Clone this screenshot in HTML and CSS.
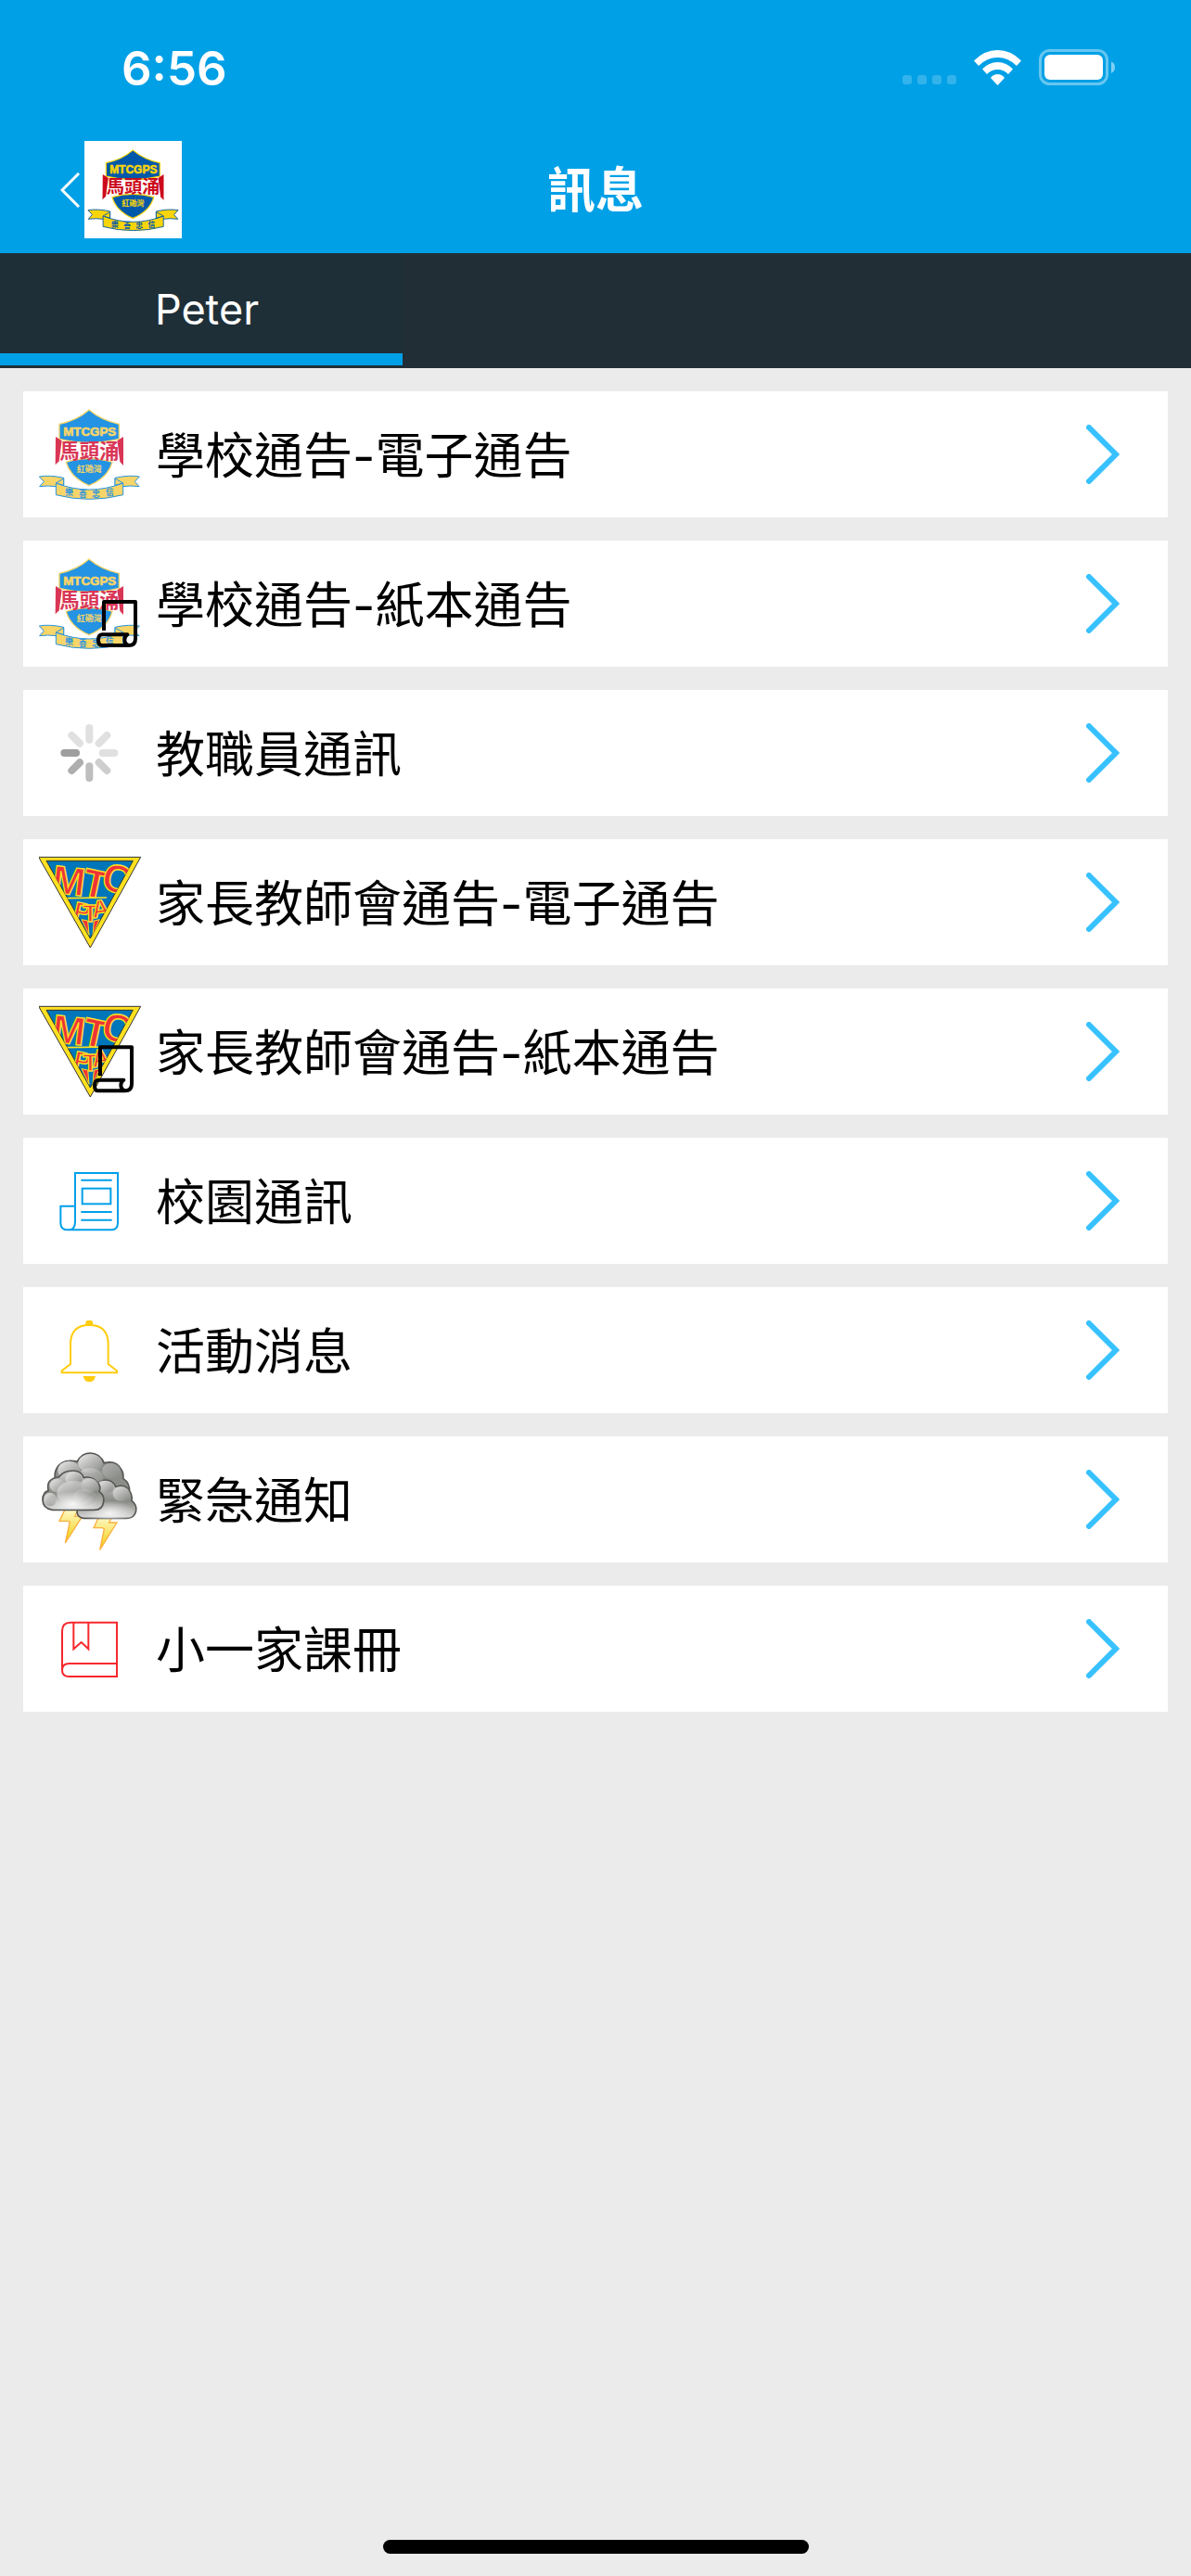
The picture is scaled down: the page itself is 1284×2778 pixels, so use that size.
FILE: index.html
```html
<!DOCTYPE html>
<html lang="zh-Hant">
<head>
  <meta charset="UTF-8">
  <meta name="viewport" content="width=device-width, initial-scale=1.0">
  <title>訊息</title>
  <link rel="stylesheet" href="styles.css">
</head>
<body>
  <!-- Shared artwork -->
  <svg class="defs" width="0" height="0" aria-hidden="true">
    <defs>
      <g id="crest">
        <path class="crest-shield" d="M228 96Q190 130 132 142V190Q180 202 228 202T325 190V142Q268 130 228 96Z"/>
        <path class="crest-shield" d="M154 265Q190 254 228 254T303 265Q290 315 228 341Q168 315 154 265Z"/>
        <text class="crest-name" x="230" y="180">MTCGPS</text>
        <path class="crest-corner" d="M120 183L140 196L131 262L119 274Z"/>
        <path class="crest-corner" d="M339 183L319 196L328 264L339 276Z"/>
        <text class="crest-school" x="229" y="251">馬頭涌</text>
        <text class="crest-area" x="229" y="297">紅磡灣</text>
        <path class="crest-ribbon" d="M67 312Q100 306 146 316V344H122Q95 340 68 344L82 328Z"/>
        <path class="crest-ribbon" d="M391 312Q358 306 312 316V344H336Q363 340 390 344L376 328Z"/>
        <path class="crest-ribbon" d="M121 333Q175 354 229 354T338 333V371Q284 385 229 385T121 371Z"/>
        <path class="crest-ribbon" d="M121 333L146 318V340ZM338 333L312 318V340Z"/>
        <text class="crest-motto" x="164" y="372">樂</text>
        <text class="crest-motto" x="208" y="377">善</text>
        <text class="crest-motto" x="251" y="377">忠</text>
        <text class="crest-motto" x="295" y="372">信</text>
      </g>
      <clipPath id="pta-clip"><path d="M90 87H370L232 337Z"/></clipPath>
      <g id="pta">
        <path d="M65 74H395L232 367Z" fill="#ffe11f" stroke="#333" stroke-width="3"/>
        <path d="M90 86H370L232 337Z" fill="#0076ba" stroke="#333" stroke-width="3"/>
        <g clip-path="url(#pta-clip)">
          <text class="pta-big" x="104" y="188" transform="rotate(7 104 188)">M</text>
          <text class="pta-big" x="200" y="196" transform="rotate(12 200 196)">T</text>
          <text class="pta-big" x="264" y="178" transform="rotate(12 264 178)">C</text>
          <path d="M157 207L285 205" stroke="#ffe11f" stroke-width="5"/>
          <text class="pta-small" x="174" y="272" transform="rotate(12 174 272)">P</text>
          <text class="pta-small" x="208" y="282">T</text>
          <text class="pta-small" x="240" y="272" transform="rotate(-8 240 272)">A</text>
          <path d="M204 276L228 326L224 280ZM262 276L240 326L244 280Z" fill="#ee3338" stroke="#ffe11f" stroke-width="3"/>
        </g>
      </g>
      <g id="paper" fill="none" stroke="#000" stroke-width="12" stroke-linejoin="round">
        <path d="M276 330V237H378V356Q378 378 356 378H270Q258 378 258 361T270 343H352Q343 349 343 360Q343 374 356 378"/>
      </g>
      <path id="chevron" d="M3 3L32 32L3 61" fill="none" stroke="#38c1ff" stroke-width="6" stroke-linecap="round"/>
      <linearGradient id="cloud-fill" x1="0" y1="0" x2="0" y2="1">
        <stop offset="0" stop-color="#d2d2d2"/>
        <stop offset="0.55" stop-color="#888a85"/>
        <stop offset="1" stop-color="#d8d8d8"/>
      </linearGradient>
      <linearGradient id="puff-fill" x1="0" y1="0" x2="1" y2="1">
        <stop offset="0" stop-color="#ececec"/>
        <stop offset="1" stop-color="#858783"/>
      </linearGradient>
      <radialGradient id="glow">
        <stop offset="0" stop-color="#fff"/>
        <stop offset="1" stop-color="#fff" stop-opacity="0"/>
      </radialGradient>
      <linearGradient id="bolt-fill" x1="0" y1="0" x2="0" y2="1">
        <stop offset="0" stop-color="#fffbd0"/>
        <stop offset="1" stop-color="#f0cc00"/>
      </linearGradient>
    </defs>
  </svg>

  <header class="header">
    <div class="status-bar">
      <span class="time">6:56</span>
      <div class="status-icons">
        <svg class="signal" viewBox="0 0 58 38" aria-hidden="true">
          <rect x="0" y="27" width="10" height="10" rx="3"/>
          <rect x="16" y="27" width="10" height="10" rx="3"/>
          <rect x="32" y="27" width="10" height="10" rx="3"/>
          <rect x="48" y="27" width="10" height="10" rx="3"/>
        </svg>
        <svg class="wifi" viewBox="0 0 51 38" aria-hidden="true">
          <path d="M0 11.500Q11 0 25.500 0T51 11.500L46 17Q37 8 25.500 8T5 17Z"/>
          <path d="M9 20.500Q16 13 25.500 13T42 20.500L37 26Q32 21 25.500 21T14 26Z"/>
          <path d="M18 30Q21 26 25.500 26T33 30L25.500 38Z"/>
        </svg>
        <svg class="battery" viewBox="0 0 82 40" aria-hidden="true">
          <rect x="1.500" y="1.500" width="72" height="36" rx="10" fill="none" stroke="#fff" stroke-opacity="0.4" stroke-width="3"/>
          <rect x="6" y="6" width="63" height="27" rx="6" fill="#fff"/>
          <path d="M78 13.500Q82 15 82 19.500T78 26Z" fill="#fff" fill-opacity="0.5"/>
        </svg>
      </div>
    </div>

    <div class="nav-bar">
      <button class="back-btn" type="button" aria-label="返回">
        <svg class="back-arrow" viewBox="0 0 22 38" aria-hidden="true">
          <path d="M20 1L2 19L20 37" fill="none" stroke="#fff" stroke-width="3"/>
        </svg>
        <svg class="school-logo" viewBox="54 63 350 350" aria-hidden="true"><use href="#crest"/></svg>
      </button>
      <h1>訊息</h1>
    </div>
  </header>

  <nav class="tabs">
    <button class="tab active" type="button">Peter</button>
  </nav>

  <main>
    <ul class="message-list">
      <li>
        <a class="card" href="#e-notice">
          <svg class="icon" viewBox="66 75 330 330" aria-hidden="true"><use href="#crest"/></svg>
          <span class="label">學校通告-電子通告</span>
          <svg class="arrow" viewBox="0 0 36 64" aria-hidden="true"><use href="#chevron"/></svg>
        </a>
      </li>
      <li>
        <a class="card" href="#paper-notice">
          <svg class="icon" viewBox="66 78 330 330" aria-hidden="true">
            <use href="#crest" y="3"/>
            <use href="#paper"/>
          </svg>
          <span class="label">學校通告-紙本通告</span>
          <svg class="arrow" viewBox="0 0 36 64" aria-hidden="true"><use href="#chevron"/></svg>
        </a>
      </li>
      <li>
        <a class="card" href="#staff">
          <svg class="icon" viewBox="-163 -165 330 330" fill="none" stroke-width="24" stroke-linecap="round" aria-hidden="true">
            <path d="M0 -81V-43" stroke="#e0e0e0"/>
            <path d="M57 -57L31 -31" stroke="#e0e0e0"/>
            <path d="M43 0H81" stroke="#e0e0e0"/>
            <path d="M31 31L57 57" stroke="#cecece"/>
            <path d="M0 43V81" stroke="#bebebe"/>
            <path d="M-31 31L-57 57" stroke="#aeaeae"/>
            <path d="M-43 0H-81" stroke="#9e9e9e"/>
            <path d="M-31 -31L-57 -57" stroke="#e0e0e0"/>
          </svg>
          <span class="label">教職員通訊</span>
          <svg class="arrow" viewBox="0 0 36 64" aria-hidden="true"><use href="#chevron"/></svg>
        </a>
      </li>
      <li>
        <a class="card" href="#pta-e-notice">
          <svg class="icon" viewBox="66 55 330 330" aria-hidden="true"><use href="#pta"/></svg>
          <span class="label">家長教師會通告-電子通告</span>
          <svg class="arrow" viewBox="0 0 36 64" aria-hidden="true"><use href="#chevron"/></svg>
        </a>
      </li>
      <li>
        <a class="card" href="#pta-paper-notice">
          <svg class="icon" viewBox="66 55 330 330" aria-hidden="true">
            <use href="#pta"/>
            <use href="#paper" x="-12" y="-31"/>
          </svg>
          <span class="label">家長教師會通告-紙本通告</span>
          <svg class="arrow" viewBox="0 0 36 64" aria-hidden="true"><use href="#chevron"/></svg>
        </a>
      </li>
      <li>
        <a class="card" href="#newsletter">
          <svg class="icon" viewBox="66 46 330 330" fill="none" stroke="#00a0e9" stroke-width="6" aria-hidden="true">
            <path d="M183 279V121H321V282Q321 305 298 305H160Q136 305 136 282V228H183V279Q183 305 160 305"/>
            <path d="M202 144H302M202 247H302M202 273H302"/>
            <rect x="206" y="171" width="92" height="50"/>
          </svg>
          <span class="label">校園通訊</span>
          <svg class="arrow" viewBox="0 0 36 64" aria-hidden="true"><use href="#chevron"/></svg>
        </a>
      </li>
      <li>
        <a class="card" href="#events">
          <svg class="icon" viewBox="66 528 330 330" aria-hidden="true">
            <path d="M168 738V674Q168 612 229 612T290 674V738L318 760V766H140V760Z" fill="none" stroke="#ffcc0d" stroke-width="6"/>
            <path d="M217 612V604Q217 597 224 597H234Q240 597 240 604V612ZM209 777H249Q245 796 229 796T209 777Z" fill="#ffcc0d"/>
          </svg>
          <span class="label">活動消息</span>
          <svg class="arrow" viewBox="0 0 36 64" aria-hidden="true"><use href="#chevron"/></svg>
        </a>
      </li>
      <li>
        <a class="card" href="#emergency">
          <svg class="icon" viewBox="66 68 330 330" aria-hidden="true">
            <g fill="url(#bolt-fill)" stroke="#fbb040" stroke-width="4">
              <path d="M152 262L132 303H158L166 305L151 374L206 288H182L194 262Z"/>
              <path d="M262 285L243 325H270L277 328L263 396L318 308H293L304 285Z"/>
            </g>
            <g stroke="#555753" stroke-width="5">
              <path d="M150 215Q105 170 122 135Q138 100 190 110Q205 83 232 83Q262 83 277 115Q315 105 332 135Q341 150 338 165Q362 180 358 210L300 240Z" fill="#8b8d89"/>
              <path d="M210 294Q185 290 190 265Q192 245 215 238Q215 205 240 200Q250 170 280 170Q305 170 314 192Q350 180 364 215Q368 227 366 237Q383 250 380 270Q375 294 350 294Z" fill="url(#cloud-fill)"/>
            </g>
            <g fill="url(#puff-fill)">
              <ellipse cx="232" cy="117" rx="39" ry="31"/>
              <ellipse cx="163" cy="139" rx="36" ry="30"/>
              <ellipse cx="232" cy="162" rx="42" ry="30" opacity="0.6"/>
              <ellipse cx="300" cy="140" rx="30" ry="25" opacity="0.4"/>
              <ellipse cx="281" cy="193" rx="27" ry="20"/>
              <ellipse cx="332" cy="215" rx="27" ry="24" opacity="0.8"/>
            </g>
            <ellipse cx="295" cy="278" rx="82" ry="42" fill="url(#glow)" opacity="0.8" clip-path="inset(0 0 25px 0)"/>
            <path d="M110 267Q78 262 78 235Q78 210 96 205Q88 165 130 161Q145 140 176 140Q203 140 210 162Q240 157 255 178Q268 190 261 207Q279 220 275 240Q272 267 245 267Z" fill="url(#cloud-fill)" stroke="#555753" stroke-width="5"/>
            <g fill="url(#puff-fill)">
              <ellipse cx="126" cy="189" rx="25" ry="22"/>
              <ellipse cx="178" cy="166" rx="27" ry="21"/>
              <ellipse cx="230" cy="188" rx="28" ry="23" opacity="0.8"/>
              <ellipse cx="102" cy="233" rx="20" ry="22"/>
              <ellipse cx="178" cy="211" rx="54" ry="38" opacity="0.7"/>
              <ellipse cx="214" cy="226" rx="38" ry="27" opacity="0.3"/>
            </g>
            <ellipse cx="175" cy="247" rx="82" ry="40" fill="url(#glow)" opacity="0.9" clip-path="inset(0 0 22px 0)"/>
          </svg>
          <span class="label">緊急通知</span>
          <svg class="arrow" viewBox="0 0 36 64" aria-hidden="true"><use href="#chevron"/></svg>
        </a>
      </li>
      <li>
        <a class="card" href="#homework">
          <svg class="icon" viewBox="66 551 330 330" fill="none" stroke="#f7282d" stroke-width="6" aria-hidden="true">
            <path d="M141 785V658Q141 631 168 631H318V806H164Q141 806 141 785Q141 764 164 764H318"/>
            <path d="M178 631V717L203 695L226 717V631"/>
          </svg>
          <span class="label">小一家課冊</span>
          <svg class="arrow" viewBox="0 0 36 64" aria-hidden="true"><use href="#chevron"/></svg>
        </a>
      </li>
    </ul>
  </main>

  <div class="home-indicator"></div>
</body>
</html>
```
FILE: styles.css
```css
* {
  margin: 0;
  padding: 0;
  box-sizing: border-box;
}

body {
  background: #ebebeb;
  min-height: 100vh;
  display: flex;
  flex-direction: column;
  font-family: Inter, 'Noto Sans CJK TC', sans-serif;
  color: #000;
}

svg {
  display: block;
  flex-shrink: 0;
}

button {
  background: none;
  border: none;
  font-family: inherit;
  cursor: pointer;
}

.defs {
  position: absolute;
}

/* Header */
.header {
  background: #00a0e6;
  color: #fff;
}

.status-bar {
  display: flex;
  align-items: center;
  justify-content: space-between;
  height: 136px;
  padding: 10px 82px 0 131px;
}

.time {
  font-size: 51px;
  font-weight: 600;
}

.status-icons {
  display: flex;
  align-items: center;
  gap: 19px;
}

.signal {
  width: 58px;
  height: 38px;
  fill: #fff;
  opacity: 0.2;
}

.wifi {
  width: 51px;
  height: 38px;
  fill: #fff;
}

.battery {
  width: 82px;
  height: 40px;
}

.nav-bar {
  display: grid;
  grid-template-columns: 1fr auto 1fr;
  align-items: center;
  height: 137px;
  padding: 0 65px;
}

.nav-bar h1 {
  padding-bottom: 6px;
  font-size: 52px;
  font-weight: 700;
}

.back-btn {
  display: flex;
  align-items: center;
  gap: 4px;
  justify-self: start;
}

.back-arrow {
  width: 22px;
  height: 38px;
}

.school-logo {
  width: 105px;
  height: 105px;
  background: #fff;
  --crest-blue: #0059a8;
  --crest-yellow: #fad40a;
  --crest-red: #cc0a1c;
}

/* Tabs */
.tabs {
  display: flex;
  height: 124px;
  background: #222e36;
}

.tab {
  width: 434px;
  padding-left: 12px;
  border-top: 13px solid transparent;
  border-bottom: 13px solid #00a0e6;
  margin-bottom: 3px;
  background: #1f2f38;
  color: #fff;
  font-size: 45px;
}

/* List */
.message-list {
  list-style: none;
  display: flex;
  flex-direction: column;
  gap: 25px;
  padding: 25px;
}

.card {
  display: flex;
  align-items: center;
  gap: 16px;
  height: 136px;
  padding: 0 52px 0 17px;
  background: #fff;
  color: inherit;
  text-decoration: none;
}

.icon {
  width: 110px;
  height: 110px;
  --crest-blue: #2493e3;
  --crest-yellow: #f8d568;
  --crest-red: #d93656;
}

.label {
  flex: 1;
  padding-top: 4px;
  font-size: 53px;
  line-height: 64px;
}

.arrow {
  width: 36px;
  height: 64px;
}

/* School crest */
.crest-shield {
  fill: var(--crest-blue);
  stroke: var(--crest-yellow);
  stroke-width: 4px;
}

.crest-ribbon {
  fill: var(--crest-yellow);
  stroke: var(--crest-blue);
  stroke-width: 3px;
}

.crest-corner {
  fill: var(--crest-red);
}

.crest-name,
.crest-school,
.crest-area,
.crest-motto {
  font-weight: 700;
  text-anchor: middle;
}

.crest-name {
  font-family: 'Liberation Sans', sans-serif;
  font-size: 40px;
  fill: var(--crest-yellow);
  stroke: var(--crest-yellow);
  stroke-width: 2px;
}

.crest-school {
  font-family: 'Noto Sans CJK TC', sans-serif;
  font-size: 64px;
  fill: var(--crest-red);
}

.crest-area {
  font-family: 'Noto Sans CJK TC', sans-serif;
  font-size: 27px;
  fill: var(--crest-yellow);
}

.crest-motto {
  font-family: 'Noto Sans CJK TC', sans-serif;
  font-size: 26px;
  fill: var(--crest-blue);
}

/* Parent-teacher association badge */
.pta-big,
.pta-small {
  font-family: 'Liberation Sans', sans-serif;
  font-weight: 700;
  fill: #ee3338;
  stroke: #ffe11f;
  stroke-width: 4px;
}

.pta-big {
  font-size: 128px;
}

.pta-small {
  font-size: 80px;
}

.home-indicator {
  width: 459px;
  height: 15px;
  margin: auto auto 24px;
  border-radius: 8px;
  background: #000;
}
```
